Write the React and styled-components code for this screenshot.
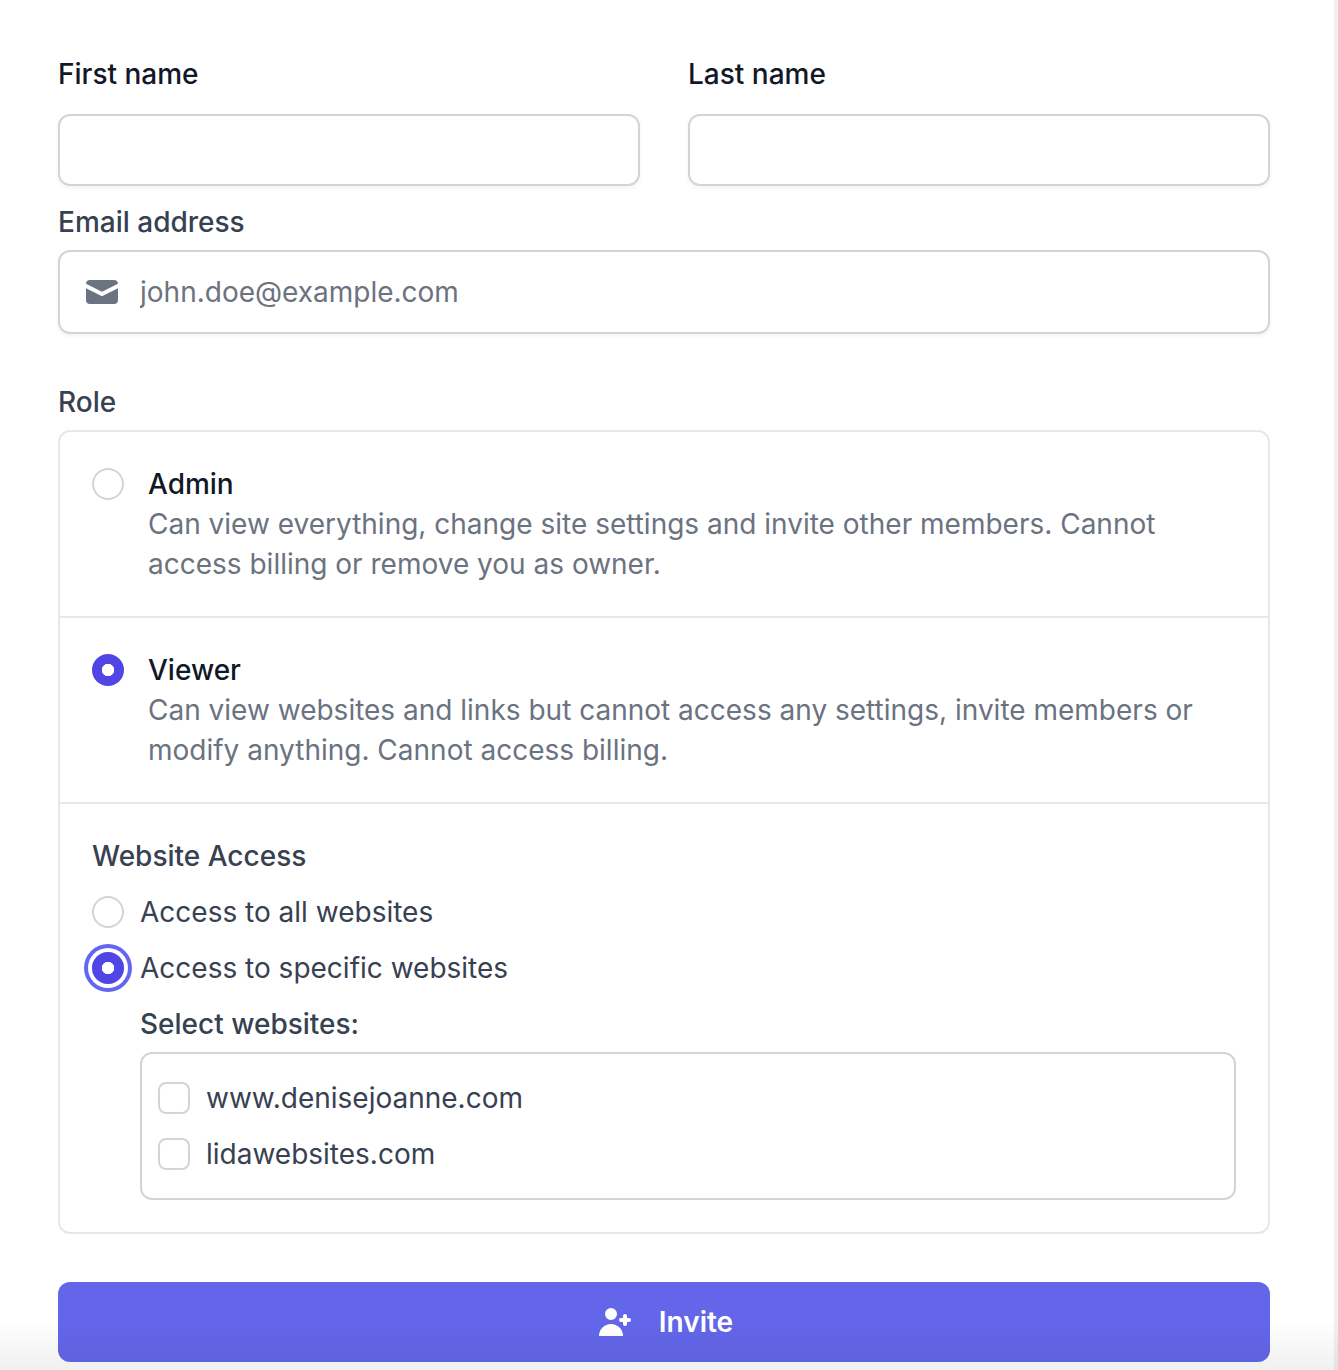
import React from 'react';
import styled, { createGlobalStyle } from 'styled-components';

const GlobalStyle = createGlobalStyle`
  * {
    box-sizing: border-box;
  }

  body {
    margin: 0;
    background: #f0f0f0;
    font-family: Inter, "Liberation Sans", sans-serif;
  }
`;

const Page = styled.div`
  position: relative;
  width: 1338px;
  height: 1370px;
  overflow: hidden;
`;

const Sheet = styled.form`
  display: flex;
  flex-direction: column;
  width: 1334px;
  height: 1370px;
  padding: 54px 64px 0 58px;
  background: #fff;
`;

const BottomFade = styled.div`
  position: absolute;
  left: 0;
  right: 0;
  bottom: 0;
  height: 50px;
  background: linear-gradient(to bottom, rgba(0, 0, 0, 0), rgba(0, 0, 0, 0.06));
  pointer-events: none;
`;

const NameRow = styled.div`
  display: grid;
  grid-template-columns: 1fr 1fr;
  column-gap: 48px;
`;

const Label = styled.label`
  display: block;
  font-size: 28px;
  line-height: 40px;
  font-weight: 500;
  color: ${(p) => (p.$dark ? '#111827' : '#374151')};
`;

const TextInput = styled.input`
  display: block;
  width: 100%;
  height: 72px;
  margin-top: 20px;
  border: 2px solid #d1d5db;
  border-radius: 12px;
  background: #fff;
  box-shadow: 0 2px 4px rgba(0, 0, 0, 0.05);
  outline: none;
`;

const EmailBlock = styled.div`
  margin-top: 16px;
`;

const EmailField = styled.div`
  display: flex;
  align-items: center;
  height: 84px;
  margin-top: 8px;
  padding-left: 22px;
  border: 2px solid #d1d5db;
  border-radius: 12px;
  box-shadow: 0 2px 4px rgba(0, 0, 0, 0.05);
`;

const EmailInput = styled.input`
  flex: 1;
  margin-left: 18px;
  padding: 0;
  border: 0;
  outline: none;
  font: inherit;
  font-size: 28px;
  line-height: 40px;
  color: #111827;

  &::placeholder {
    color: #6b7280;
    opacity: 1;
  }
`;

const MailIcon = styled.svg`
  flex: none;
  width: 40px;
  height: 40px;
  fill: #6b7280;
`;

const RoleBlock = styled.div`
  margin-top: 48px;
`;

const RoleCard = styled.div`
  margin-top: 8px;
  border: 2px solid #e5e7eb;
  border-radius: 12px;
`;

const RoleRow = styled.div`
  display: flex;
  gap: 24px;
  padding: 32px;
  border-bottom: 2px solid #e5e7eb;
`;

const Radio = styled.input.attrs({ type: 'radio' })`
  appearance: none;
  flex: none;
  width: 32px;
  height: 32px;
  margin: 4px 0;
  border: 2px solid #d1d5db;
  border-radius: 50%;
  background: #fff;
  outline: none;

  &:checked {
    border-color: #4f46e5;
    background: radial-gradient(circle, #fff 0 6px, #4f46e5 6.5px);
  }

  ${(p) => p.$focused && 'box-shadow: 0 0 0 4px #fff, 0 0 0 8px #6366f1;'}
`;

const RoleText = styled.div`
  flex: 1;
`;

const RoleTitle = styled.div`
  font-size: 28px;
  line-height: 40px;
  font-weight: 500;
  color: #111827;
`;

const RoleDesc = styled.div`
  font-size: 28px;
  line-height: 40px;
  color: #6b7280;
`;

const AccessSection = styled.div`
  padding: 32px;
`;

const AccessTitle = styled.div`
  font-size: 28px;
  line-height: 40px;
  font-weight: 500;
  color: #374151;
`;

const OptionRow = styled.label`
  display: flex;
  gap: 16px;
  margin-top: 16px;
  font-size: 28px;
  line-height: 40px;
  color: #374151;
`;

const Sites = styled.div`
  margin-left: 48px;
  margin-top: 16px;
`;

const SitesLabel = styled.div`
  font-size: 28px;
  line-height: 40px;
  font-weight: 500;
  color: #374151;
`;

const SitesBox = styled.div`
  display: flex;
  flex-direction: column;
  gap: 16px;
  margin-top: 8px;
  padding: 24px 16px;
  border: 2px solid #d1d5db;
  border-radius: 12px;
`;

const SiteRow = styled.label`
  display: flex;
  gap: 16px;
  font-size: 28px;
  line-height: 40px;
  color: #374151;
`;

const Checkbox = styled.input.attrs({ type: 'checkbox' })`
  appearance: none;
  flex: none;
  width: 32px;
  height: 32px;
  margin: 4px 0;
  border: 2px solid #d1d5db;
  border-radius: 8px;
  background: #fff;
`;

const InviteButton = styled.button`
  display: flex;
  align-items: center;
  justify-content: center;
  gap: 24px;
  width: 100%;
  height: 80px;
  margin-top: 48px;
  border: 0;
  border-radius: 12px;
  background: #6366e9;
  color: #fff;
  font: inherit;
  font-size: 28px;
  font-weight: 600;
`;

const InviteIcon = styled.svg`
  width: 40px;
  height: 40px;
  fill: #fff;
`;

function App() {
  return (
    <Page>
      <GlobalStyle />
      <Sheet>
        <NameRow>
          <div>
            <Label $dark>First name</Label>
            <TextInput type="text" />
          </div>
          <div>
            <Label $dark>Last name</Label>
            <TextInput type="text" />
          </div>
        </NameRow>

        <EmailBlock>
          <Label>Email address</Label>
          <EmailField>
            <MailIcon viewBox="0 0 20 20">
              <path d="M2.003 5.884L10 9.882l7.997-3.998A2 2 0 0016 4H4a2 2 0 00-1.997 1.884z" />
              <path d="M18 8.118l-8 4-8-4V14a2 2 0 002 2h12a2 2 0 002-2V8.118z" />
            </MailIcon>
            <EmailInput type="email" placeholder="john.doe@example.com" />
          </EmailField>
        </EmailBlock>

        <RoleBlock>
          <Label>Role</Label>
          <RoleCard>
            <RoleRow>
              <Radio name="role" />
              <RoleText>
                <RoleTitle>Admin</RoleTitle>
                <RoleDesc>
                  Can view everything, change site settings and invite other members. Cannot access billing or remove you as owner.
                </RoleDesc>
              </RoleText>
            </RoleRow>
            <RoleRow>
              <Radio name="role" defaultChecked />
              <RoleText>
                <RoleTitle>Viewer</RoleTitle>
                <RoleDesc>
                  Can view websites and links but cannot access any settings, invite members or modify anything. Cannot access billing.
                </RoleDesc>
              </RoleText>
            </RoleRow>
            <AccessSection>
              <AccessTitle>Website Access</AccessTitle>
              <OptionRow>
                <Radio name="access" />
                Access to all websites
              </OptionRow>
              <OptionRow>
                <Radio name="access" defaultChecked $focused />
                Access to specific websites
              </OptionRow>
              <Sites>
                <SitesLabel>Select websites:</SitesLabel>
                <SitesBox>
                  <SiteRow>
                    <Checkbox />
                    www.denisejoanne.com
                  </SiteRow>
                  <SiteRow>
                    <Checkbox />
                    lidawebsites.com
                  </SiteRow>
                </SitesBox>
              </Sites>
            </AccessSection>
          </RoleCard>
        </RoleBlock>

        <InviteButton type="button">
          <InviteIcon viewBox="0 0 20 20">
            <path d="M8 9a3 3 0 100-6 3 3 0 000 6zM8 11a6 6 0 016 6H2a6 6 0 016-6zM16 7a1 1 0 10-2 0v1h-1a1 1 0 100 2h1v1a1 1 0 102 0v-1h1a1 1 0 100-2h-1V7z" />
          </InviteIcon>
          Invite
        </InviteButton>
      </Sheet>
      <BottomFade />
    </Page>
  );
}

export default App;
